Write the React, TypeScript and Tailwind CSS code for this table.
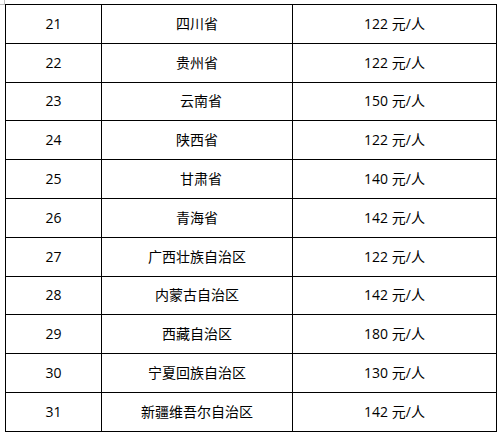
import React from 'react';

const rows: { no: number; name: string; price: string; shift?: boolean }[] = [
  { no: 21, name: '四川省', price: '122 元/人' },
  { no: 22, name: '贵州省', price: '122 元/人' },
  { no: 23, name: '云南省', price: '150 元/人', shift: true },
  { no: 24, name: '陕西省', price: '122 元/人' },
  { no: 25, name: '甘肃省', price: '140 元/人', shift: true },
  { no: 26, name: '青海省', price: '142 元/人' },
  { no: 27, name: '广西壮族自治区', price: '122 元/人' },
  { no: 28, name: '内蒙古自治区', price: '142 元/人' },
  { no: 29, name: '西藏自治区', price: '180 元/人' },
  { no: 30, name: '宁夏回族自治区', price: '130 元/人' },
  { no: 31, name: '新疆维吾尔自治区', price: '142 元/人' },
];

const App: React.FC = () => {
  return (
    <div
      className="relative w-[502px] h-[437px] bg-white overflow-hidden pt-[4px] pl-[5px] text-black"
      style={{ fontFamily: '"Open Sans", "Noto Sans CJK SC", sans-serif' }}
    >
      {/* page corner mark */}
      <div className="absolute left-0 top-[4px] w-[5px] h-px bg-[#bfbfbf]" />
      <div className="absolute left-[4px] top-0 w-px h-[5px] bg-[#bfbfbf]" />

      <table className="table-fixed border-collapse w-[491px] text-[14px]">
        <colgroup>
          <col className="w-[96px]" />
          <col className="w-[191px]" />
          <col className="w-[204px]" />
        </colgroup>
        <tbody>
          {rows.map((r) => (
            <tr key={r.no} className="h-[38.8px]">
              <td className="border border-black text-center p-0 leading-none">{r.no}</td>
              <td className={`border border-black text-center p-0 leading-none ${r.shift ? 'pl-[8px]' : ''}`}>
                {r.name}
              </td>
              <td className="border border-black text-center p-0 leading-none">{r.price}</td>
            </tr>
          ))}
        </tbody>
      </table>
    </div>
  );
};

export default App;
